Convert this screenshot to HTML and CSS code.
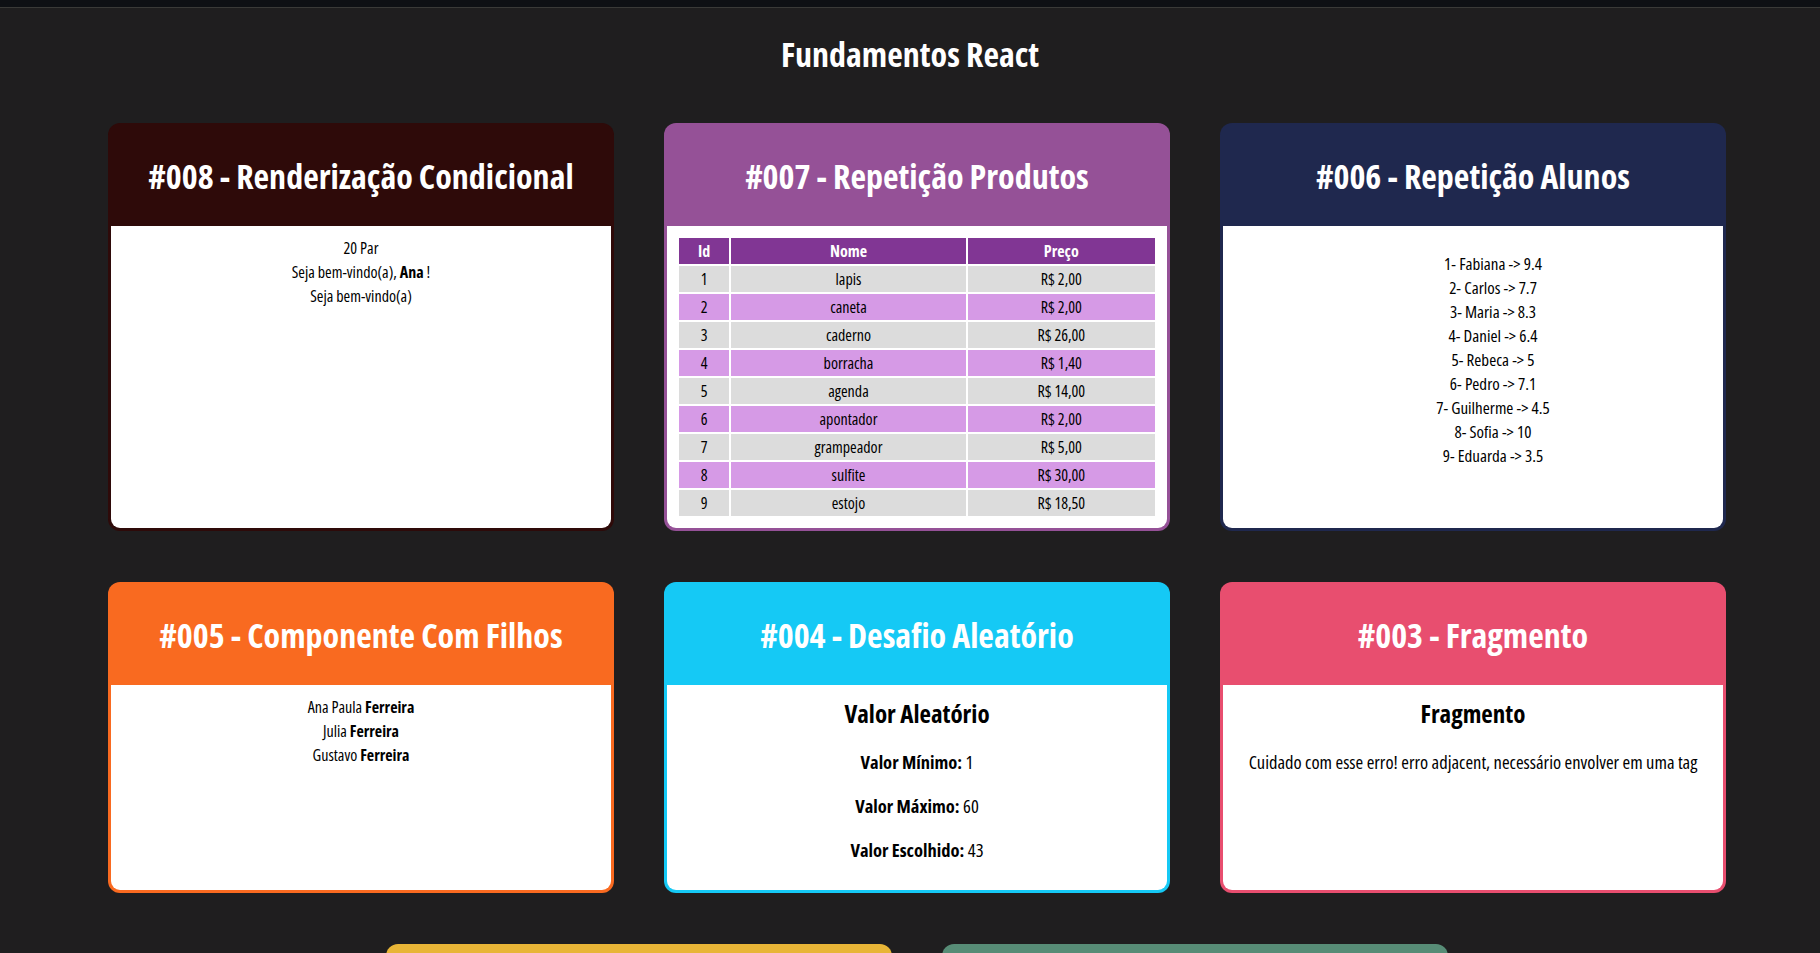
FILE: index.html
```html
<!DOCTYPE html>
<html lang="pt-BR">
<head>
<meta charset="utf-8">
<title>Fundamentos React</title>
<link rel="stylesheet" href="styles.css">
</head>
<body>
<div class="topstrip"></div>
<h1 class="page-title">Fundamentos React</h1>
<main class="cards">
  <section class="card c008">
    <header class="card-head"><h2>#008 - Renderização Condicional</h2></header>
    <div class="card-body">
      <div>20 Par</div>
      <div>Seja bem-vindo(a), <b>Ana</b> !</div>
      <div>Seja bem-vindo(a)</div>
    </div>
  </section>
  <section class="card c007">
    <header class="card-head"><h2>#007 - Repetição Produtos</h2></header>
    <div class="card-body">
      <table class="produtos">
        <thead><tr><th class="col-id">Id</th><th class="col-nome">Nome</th><th class="col-preco">Preço</th></tr></thead>
        <tbody>
          <tr><td>1</td><td>lapis</td><td>R$ 2,00</td></tr>
          <tr><td>2</td><td>caneta</td><td>R$ 2,00</td></tr>
          <tr><td>3</td><td>caderno</td><td>R$ 26,00</td></tr>
          <tr><td>4</td><td>borracha</td><td>R$ 1,40</td></tr>
          <tr><td>5</td><td>agenda</td><td>R$ 14,00</td></tr>
          <tr><td>6</td><td>apontador</td><td>R$ 2,00</td></tr>
          <tr><td>7</td><td>grampeador</td><td>R$ 5,00</td></tr>
          <tr><td>8</td><td>sulfite</td><td>R$ 30,00</td></tr>
          <tr><td>9</td><td>estojo</td><td>R$ 18,50</td></tr>
        </tbody>
      </table>
    </div>
  </section>
  <section class="card c006">
    <header class="card-head"><h2>#006 - Repetição Alunos</h2></header>
    <div class="card-body">
      <ul class="alunos">
        <li>1- Fabiana -&gt; 9.4</li>
        <li>2- Carlos -&gt; 7.7</li>
        <li>3- Maria -&gt; 8.3</li>
        <li>4- Daniel -&gt; 6.4</li>
        <li>5- Rebeca -&gt; 5</li>
        <li>6- Pedro -&gt; 7.1</li>
        <li>7- Guilherme -&gt; 4.5</li>
        <li>8- Sofia -&gt; 10</li>
        <li>9- Eduarda -&gt; 3.5</li>
      </ul>
    </div>
  </section>
  <section class="card c005">
    <header class="card-head"><h2>#005 - Componente Com Filhos</h2></header>
    <div class="card-body">
      <div>Ana Paula <b>Ferreira</b></div>
      <div>Julia <b>Ferreira</b></div>
      <div>Gustavo <b>Ferreira</b></div>
    </div>
  </section>
  <section class="card c004">
    <header class="card-head"><h2>#004 - Desafio Aleatório</h2></header>
    <div class="card-body">
      <h3 class="sub">Valor Aleatório</h3>
      <p class="line"><b>Valor Mínimo:</b> 1</p>
      <p class="line"><b>Valor Máximo:</b> 60</p>
      <p class="line last"><b>Valor Escolhido:</b> 43</p>
    </div>
  </section>
  <section class="card c003">
    <header class="card-head"><h2>#003 - Fragmento</h2></header>
    <div class="card-body">
      <h3 class="sub">Fragmento</h3>
      <p class="line">Cuidado com esse erro! erro adjacent, necessário envolver em uma tag</p>
    </div>
  </section>
  <section class="card c002">
    <header class="card-head"><h2>#002 - Com Parâmetro</h2></header>
    <div class="card-body"><div>Olá</div></div>
  </section>
  <section class="card c001">
    <header class="card-head"><h2>#001 - Primeiro Componente</h2></header>
    <div class="card-body"><div>Primeiro</div></div>
  </section>
</main>
</body>
</html>
```

FILE: styles.css
```css
html, body {
  margin: 0;
  padding: 0;
  background: #1f1e1f;
  overflow: hidden;
}

body {
  font-family: "Open Sans", sans-serif;
  font-stretch: 75%;
  color: #000;
}

.topstrip {
  height: 7px;
  background: #0e1014;
  border-bottom: 1px solid #3a3a38;
}

.page-title {
  margin: 22px 0 0;
  height: 48px;
  line-height: 48px;
  text-align: center;
  color: #fff;
  font-size: 34px;
  font-weight: 700;
}

.cards {
  display: flex;
  flex-wrap: wrap;
  justify-content: center;
  gap: 51px 50px;
  width: 1618px;
  margin: 45px 0 0 108px;
}

.card {
  width: 506px;
  box-sizing: border-box;
  display: flex;
  flex-direction: column;
  border-radius: 12px;
  padding: 0 3px 3px;
}

.card-head {
  height: 103px;
  display: flex;
  align-items: center;
  justify-content: center;
}

.card-head h2 {
  margin: 0;
  color: #fff;
  font-size: 34px;
  font-weight: 700;
  line-height: 48px;
  padding-top: 2px;
  white-space: nowrap;
}

.card-body {
  flex: 1;
  background: #fff;
  border-radius: 0 0 9px 9px;
  padding: 10px;
  text-align: center;
  font-size: 16px;
  line-height: 24px;
}

.c008 { background: #2e0a09; }
.c007 { background: #955197; }
.c006 { background: #1f284e; }
.c005 { background: #f96a20; }
.c004 { background: #15c9f5; }
.c003 { background: #e84e6f; }
.c002 { background: #e8b537; }
.c001 { background: #578c76; }

.produtos {
  width: 100%;
  border-spacing: 2px;
  font-size: 16px;
}

.produtos th,
.produtos td {
  padding: 1px;
  height: 24px;
  line-height: 24px;
  text-align: center;
}

.produtos th {
  background: #813694;
  color: #fff;
  font-weight: 700;
}

.col-id { width: 49px; }
.col-nome { width: 235px; }
.col-preco { width: 188px; }

.produtos tbody tr:nth-child(odd) td { background: #dcdcdc; }
.produtos tbody tr:nth-child(even) td { background: #d69ae6; }

.alunos {
  list-style: none;
  margin: 16px 0;
  padding-left: 40px;
  font-size: 17px;
}

.sub {
  margin: 0;
  font-size: 25px;
  line-height: 36px;
  font-weight: 700;
}

.line {
  margin: 18px 0 0;
  font-size: 18.5px;
  line-height: 26px;
}

.line + .line {
  margin-top: 18px;
}

.line.last {
  margin-bottom: 17px;
}
```
